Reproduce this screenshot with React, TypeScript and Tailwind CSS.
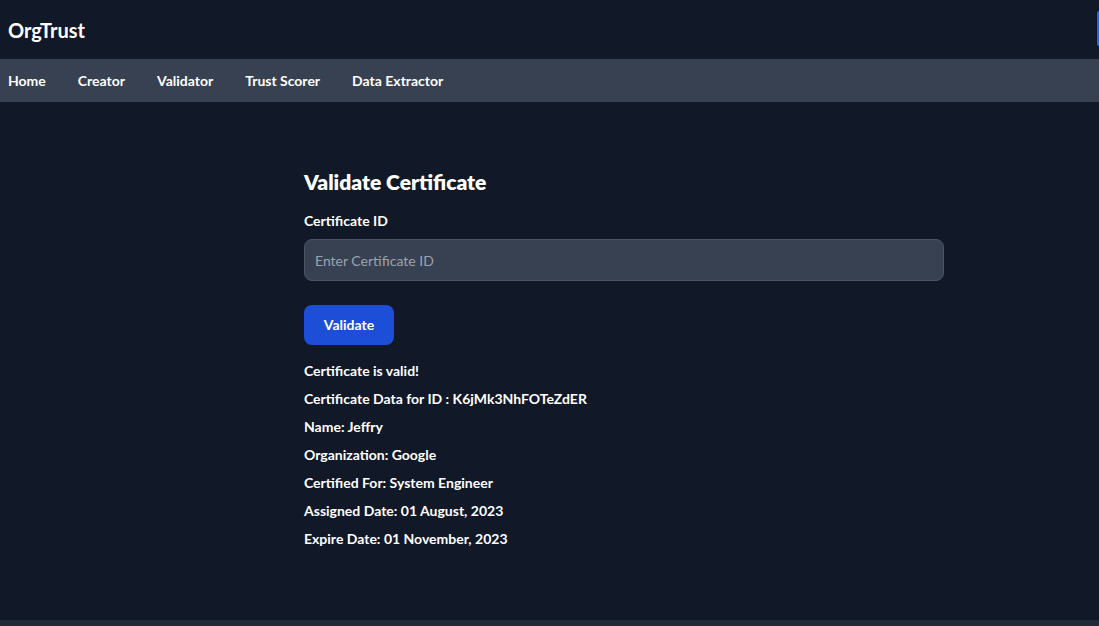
const results = [
  "Certificate is valid!",
  "Certificate Data for ID : K6jMk3NhFOTeZdER",
  "Name: Jeffry",
  "Organization: Google",
  "Certified For: System Engineer",
  "Assigned Date: 01 August, 2023",
  "Expire Date: 01 November, 2023",
];

const links = ["Home", "Creator", "Validator", "Trust Scorer", "Data Extractor"];

export default function App() {
  return (
    <div className="h-[626px] overflow-hidden bg-[#111827] text-white font-['Lato',sans-serif]">
      {/* Top header */}
      <header className="h-[59px] flex items-center justify-between pl-2">
        <h1 className="text-xl font-bold">OrgTrust</h1>
        <div className="h-[35px] w-[2px] rounded-l bg-[#2563eb] mb-[3px]" />
      </header>

      {/* Nav */}
      <nav className="h-[43px] bg-[#374151] flex items-center gap-8 px-2 text-sm font-bold">
        {links.map((l) => (
          <a key={l} href="#" className="text-white">
            {l}
          </a>
        ))}
      </nav>

      {/* Main */}
      <main className="h-[518px] pt-[66px] pl-[304px]">
        <div className="w-[640px]">
          <h2 className="text-[21px] leading-7 font-extrabold mb-[15px]">Validate Certificate</h2>
          <label className="block text-sm font-bold mb-[8px]">Certificate ID</label>
          <input
            type="text"
            placeholder="Enter Certificate ID"
            className="w-full h-[42px] rounded-lg border border-[#4b5563] bg-[#374151] px-[10px] text-sm text-white placeholder-[#9ca3af] outline-none"
          />
          <button className="mt-[24px] h-[40px] w-[90px] rounded-lg bg-[#1d4ed8] text-sm font-bold">
            Validate
          </button>
          <div className="mt-[16px] flex flex-col gap-[8px] text-sm font-bold">
            {results.map((r) => (
              <p key={r} className="leading-5">{r}</p>
            ))}
          </div>
        </div>
      </main>

      <footer className="h-[20px] bg-[#1f2937]" />
    </div>
  );
}
